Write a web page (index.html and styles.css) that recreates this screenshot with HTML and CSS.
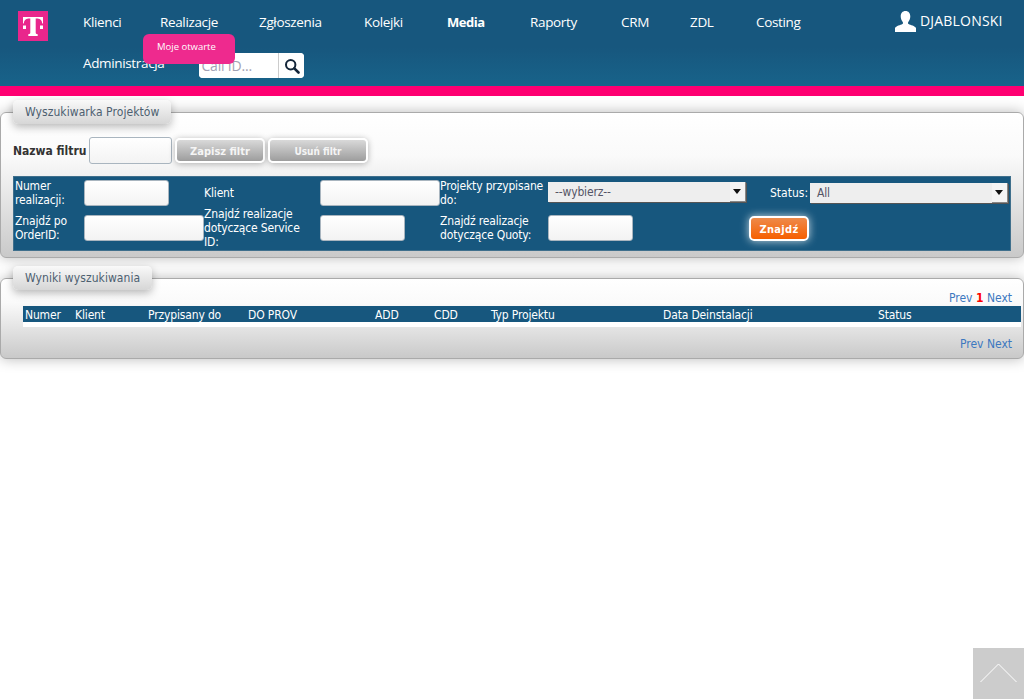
FILE: index.html
```html
<!DOCTYPE html>
<html lang="pl">
<head>
<meta charset="utf-8">
<title>Wyszukiwarka Projektów</title>
<link rel="stylesheet" href="styles.css">
</head>
<body>
<header class="top">
  <a class="logo" href="#" aria-label="T"><svg width="30" height="30" viewBox="0 0 30 30"><rect width="30" height="30" fill="#e9268c"/><path fill="#fff" d="M5 6h20v6.500h-.8c-.2-3-1.500-5-4.700-5.100H17.700v14.200c0 1.200.5 1.600 2 1.600V25h-9.400v-1.800c1.500 0 2-.4 2-1.600V7.400H10.500C7.300 7.500 6 9.500 5.800 12.500H5z"/><rect x="5" y="14.500" fill="#fff" width="3" height="3.500"/><rect x="22" y="14.500" fill="#fff" width="3" height="3.500"/></svg></a>
  <nav class="nav">
    <div class="nav-row nav-row-first">
      <a class="nav-item" href="#">Klienci</a>
      <a class="nav-item" href="#">Realizacje</a>
      <a class="nav-item" href="#">Zgłoszenia</a>
      <a class="nav-item" href="#">Kolejki</a>
      <a class="nav-item nav-active" href="#">Media</a>
      <a class="nav-item" href="#">Raporty</a>
      <a class="nav-item" href="#">CRM</a>
      <a class="nav-item" href="#">ZDL</a>
      <a class="nav-item" href="#">Costing</a>
    </div>
    <div class="nav-row nav-row-second">
      <a class="nav-item" href="#">Administracja</a>
      <form class="call-search">
        <input class="call-input" type="text" placeholder="Call ID...">
        <button class="call-btn" type="button" aria-label="Szukaj"><svg width="16" height="16" viewBox="0 0 16 16"><circle cx="6.700" cy="6.700" r="4.700" fill="none" stroke="#14263a" stroke-width="2"/><path d="M10.300 10.300 14.500 14.500" stroke="#14263a" stroke-width="2.600" stroke-linecap="round"/></svg></button>
      </form>
    </div>
    <div class="tooltip">Moje otwarte</div>
  </nav>
  <div class="user">
    <svg width="21" height="21" viewBox="0 0 21 21"><path fill="#fff" d="M10.500 0c3 0 4.800 2.200 4.800 5.300 0 2.300-.9 4.400-2 5.700-.5.700-.4 1.700.3 2.100 1.800 1 6.400 2 7.400 3.900V21H0v-4c1-1.900 5.600-2.900 7.400-3.900.7-.4.800-1.400.3-2.100-1.100-1.300-2-3.400-2-5.700C5.700 2.200 7.500 0 10.500 0z"/></svg>
    <span>DJABLONSKI</span>
  </div>
</header>
<div class="pink-bar"></div>

<main class="content">
  <section class="panel panel-search">
    <h2 class="legend">Wyszukiwarka Projektów</h2>
    <div class="filter-row">
      <label class="filter-label">Nazwa filtru</label>
      <input class="field filter-input" type="text">
      <button class="btn btn-grey btn-save" type="button">Zapisz filtr</button>
      <button class="btn btn-grey btn-del" type="button">Usuń filtr</button>
    </div>
    <div class="form-grid">
      <label>Numer realizacji:</label>
      <div><input class="field w85" type="text"></div>
      <label>Klient</label>
      <div><input class="field w120" type="text"></div>
      <label>Projekty przypisane do:</label>
      <div class="select select-a"><span>--wybierz--</span><i class="arrow"></i></div>
      <label class="status-label">Status:</label>
      <div class="select select-b"><span>All</span><i class="arrow"></i></div>

      <label>Znajdź po OrderID:</label>
      <div><input class="field w120" type="text"></div>
      <label class="label-narrow">Znajdź realizacje dotyczące Service ID:</label>
      <div><input class="field w85" type="text"></div>
      <label>Znajdź realizacje dotyczące Quoty:</label>
      <div class="quota-cell"><input class="field w85" type="text"><button class="btn btn-find" type="button">Znajdź</button></div>
    </div>
  </section>

  <section class="panel panel-results">
    <h2 class="legend">Wyniki wyszukiwania</h2>
    <div class="pager pager-top"><a href="#">Prev</a> <b>1</b> <a href="#">Next</a></div>
    <div class="results-wrap">
      <table class="results">
        <colgroup>
          <col class="c1"><col class="c2"><col class="c3"><col class="c4"><col class="c5"><col class="c6"><col class="c7"><col class="c8"><col class="c9">
        </colgroup>
        <thead>
          <tr><th>Numer</th><th>Klient</th><th>Przypisany do</th><th>DO PROV</th><th>ADD</th><th>CDD</th><th>Typ Projektu</th><th>Data Deinstalacji</th><th>Status</th></tr>
        </thead>
      </table>
      <div class="results-empty"></div>
    </div>
    <div class="pager pager-bottom"><a href="#">Prev</a> <a href="#">Next</a></div>
  </section>
</main>

<a class="to-top" href="#" aria-label="Do góry"><svg width="51" height="51" viewBox="0 0 51 51"><path d="M7.500 34 25.500 16 43.500 34" fill="none" stroke="#fff" stroke-width="1"/></svg></a>
</body>
</html>
```
FILE: styles.css
```css
* { box-sizing: border-box; }
html, body { height: 100%; }
body {
  margin: 0;
  background: #fff;
  font-family: "DejaVu Sans Condensed", "DejaVu Sans", sans-serif;
  font-size: 12px;
  color: #333;
  overflow: hidden;
}
a { text-decoration: none; }

.top {
  height: 86px;
  background: linear-gradient(#17577e 0%, #17577e 55%, #18638a 100%);
  display: flex;
  align-items: flex-start;
  font-family: "Open Sans", sans-serif;
  color: #fff;
}
.logo { display: block; width: 30px; height: 30px; margin: 11px 0 0 18px; }
.logo svg { display: block; }
.nav { position: relative; margin-left: 35px; width: 820px; padding-top: 12px; }
.nav-row { display: flex; height: 19px; align-items: center; }
.nav-row-first { display: grid; grid-template-columns: 77px 99px 105px 83px 83px 91px 69px 66px 60px; }
.nav-row-second { margin-top: 22px; height: 25px; }
.nav-item { color: #fff; font-size: 13.500px; letter-spacing: -0.35px; white-space: nowrap; }
.nav-active { font-weight: 700; font-size: 13px; letter-spacing: -0.5px; }
.nav-row-second .nav-item { margin-right: 35px; padding-bottom: 6px; }
.call-search { display: flex; width: 105px; height: 25px; background: #fff; border-radius: 4px; overflow: hidden; }
.call-input {
  width: 79px; border: 0; padding: 0 0 0 2px; height: 25px; outline: 0; background: #fff;
  font: 14px "Open Sans", sans-serif; letter-spacing: -0.2px;
}
.call-input::placeholder { color: #a2a2b4; }
.call-btn { width: 26px; height: 25px; padding: 0; border: 0; border-left: 1px solid #ccc; background: #fff; display: flex; align-items: center; justify-content: center; }
.tooltip {
  position: absolute; left: 60px; top: 34px; width: 92px; height: 30px;
  background: #ee2a8e; color: #fff; border-radius: 6px;
  font-size: 9.500px; padding: 6px 0 0 14px; line-height: 13px;
}
.user { display: flex; align-items: flex-start; margin: 11px 0 0 -8px; gap: 4px; font-size: 14px; line-height: 20px; letter-spacing: 0.2px; white-space: nowrap; }

.pink-bar { height: 10px; background: #ff0072; }

.panel {
  position: relative;
  border: 1px solid #aaa;
  border-radius: 6px;
  background: linear-gradient(#fff 0%, #fafafa 30%, #c9c9c9 100%);
  box-shadow: 0 0 14px rgba(0,0,0,.28);
}
.panel-search { margin-top: 16px; height: 146px; padding: 23px 13px 0 12px; }
.panel-results { margin-top: 20px; height: 81px; }
.legend {
  position: absolute; left: 12px; top: -13px; margin: 0;
  height: 24px; padding: 0 12px 0 12px; line-height: 24px;
  font-size: 12px; font-weight: 400; color: #4d5f70;
  background: linear-gradient(#f9f9f9, #d6d6d6);
  border-radius: 5px;
  box-shadow: 0 3px 8px rgba(0,0,0,.28);
  letter-spacing: .07px;
}
.filter-row { display: flex; align-items: center; height: 28px; margin-bottom: 12px; }
.filter-label { font-weight: 700; font-size: 12px; color: #333; width: 76px; white-space: nowrap; padding-top: 1px; }
.field { display: block; border: 1px solid #a9b5bf; border-radius: 3px; height: 26px; padding: 0 3px; background: linear-gradient(#fff, #f3f3f3); outline: 0; }
.filter-input { width: 83px; height: 27px; }
.btn { font-family: "DejaVu Sans Condensed", "DejaVu Sans", sans-serif; font-weight: 700; color: #fff; border: 2px solid #fff; border-radius: 5px; padding: 2px 0 0; box-shadow: 0 1px 6px rgba(0,0,0,.3); }
.btn-grey { background: linear-gradient(#d9d9d9, #9d9d9d); color: #f5f5f5; font-size: 11px; height: 25px; }
.btn-save { width: 90px; margin-left: 3px; }
.btn-del { width: 100px; margin-left: 3px; font-size: 10px; }
.btn-find { width: 60px; height: 25px; margin: 1px 0 0 116px; flex: none; background: linear-gradient(#ee8a4a, #f65f00); font-size: 11px; letter-spacing: .3px; box-shadow: 0 0 9px rgba(255,255,255,.75); }

.form-grid {
  display: grid;
  grid-template-columns: 69px 120px 116px 120px 108px 222px 40px 200px;
  grid-template-rows: 33px 38px;
  align-items: center;
  width: 998px;
  height: 75px;
  padding: 0 0 4px 2px;
  background: #17577e;
  color: #fff;
  font-size: 12px;
  line-height: 14px;
  letter-spacing: -0.15px;
  box-shadow: inset 0 0 0 1px #3f6f8c;
}
.label-narrow { padding-right: 10px; }
.w85 { width: 85px; }
.w120 { width: 120px; }
.status-label { white-space: nowrap; letter-spacing: 0; }
.quota-cell { display: flex; white-space: nowrap; }
.select { position: relative; height: 20px; background: #eee; color: #556; line-height: 20px; padding-left: 7px; box-shadow: 1px 1px 0 #555; }
.select-a { width: 198px; margin-top: -1px; }
.select-b { width: 198px; }
.arrow { position: absolute; right: 0; top: 0; width: 16px; height: 20px; background: #f4f4f4; box-shadow: inset -1px -1px 0 #888; }
.arrow::after { content: ""; position: absolute; left: 3px; top: 7px; border: 4px solid transparent; border-top: 5px solid #111; border-bottom: 0; }

.pager { position: absolute; right: 11px; font-size: 12px; color: #333; }
.pager a { color: #3c78c0; }
.pager b { color: #f00; }
.pager-top { top: 12px; }
.pager-bottom { top: 58px; }
.results-wrap { position: absolute; left: 22px; top: 27px; width: 998px; }
.results { width: 998px; border-collapse: collapse; table-layout: fixed; background: #17577e; color: #fff; font-size: 12px; letter-spacing: -0.15px; }
.results th { font-weight: 400; text-align: left; padding: 3px 0 0 2px; height: 16px; line-height: 13px; }
.c1 { width: 50px; } .c2 { width: 73px; } .c3 { width: 100px; } .c4 { width: 127px; } .c5 { width: 59px; } .c6 { width: 57px; } .c7 { width: 172px; } .c8 { width: 215px; } .c9 { width: 145px; }
.results-empty { height: 5px; background: #fff; }

.to-top { position: fixed; right: 0; bottom: 0; width: 51px; height: 51px; background: #ccc; display: block; }
.to-top svg { display: block; }
```
